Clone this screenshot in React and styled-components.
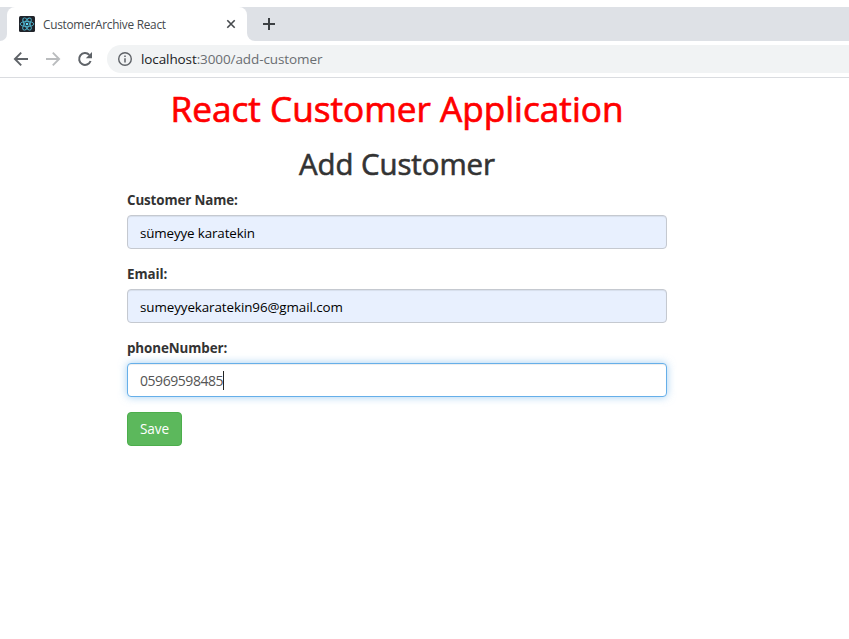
import React from "react";
import styled, { createGlobalStyle } from "styled-components";

const GlobalStyle = createGlobalStyle`
  *, *::before, *::after { box-sizing: border-box; }
  html, body { margin: 0; background: #fff; }
  body {
    font-family: "Open Sans", "Noto Sans", sans-serif;
    font-size: 13.4px;
    line-height: 20px;
    color: #333;
    overflow: hidden;
  }
`;

const Window = styled.div`
  height: 639px;
  padding-top: 7px;
  display: flex;
  flex-direction: column;
  background: #fff;
`;

const TabStrip = styled.div`
  display: flex;
  height: 34px;
`;

const StripStart = styled.div`
  width: 7px;
  background: #dee1e6;
  border-bottom-right-radius: 7px;
`;

const StripRest = styled.div`
  flex: 1;
  display: flex;
  align-items: center;
  padding-left: 15px;
  background: #dee1e6;
  border-bottom-left-radius: 8px;
`;

const TabSlot = styled.div`
  width: 240px;
  background: linear-gradient(#dee1e6 10px, #fff 10px);
`;

const Tab = styled.div`
  height: 34px;
  display: flex;
  align-items: center;
  padding: 0 10px 0 12px;
  background: #fff;
  border-radius: 8px 8px 0 0;
`;

const TabTitle = styled.span`
  flex: 1;
  margin-left: 8px;
  font-size: 11.8px;
  line-height: 16px;
  letter-spacing: ${(p) => p.$spacing};
  color: #45494d;
  white-space: nowrap;
`;

const Toolbar = styled.div`
  height: 37px;
  display: flex;
  align-items: center;
  padding-left: 13px;
  border-bottom: 1px solid #dadce0;
`;

const NavButtons = styled.div`
  display: flex;
  gap: 16px;
  width: 94px;
`;

const AddressBar = styled.div`
  flex: 1;
  height: 28px;
  display: flex;
  align-items: center;
  gap: 8px;
  padding-left: 10px;
  border-radius: 14px 0 0 14px;
  background: #f1f3f4;
`;

const Url = styled.span`
  font-size: 13.5px;
  letter-spacing: ${(p) => p.$spacing};
  color: #6a6e72;
  white-space: nowrap;
`;

const Host = styled.span`
  color: #202124;
`;

const Icon = styled.svg`
  display: block;
  flex: none;
`;

const Page = styled.main`
  width: 540px;
  margin-left: 127px;
`;

const Title = styled.h1`
  margin: 10px 0 0;
  font-size: 35.2px;
  line-height: 40px;
  font-weight: 500;
  letter-spacing: ${(p) => p.$spacing};
  text-align: center;
  white-space: nowrap;
  color: #f00;
  -webkit-text-stroke: 0.7px #f00;
`;

const Subtitle = styled.h2`
  margin: 19px 0 9px;
  font-size: 29.4px;
  line-height: 34px;
  font-weight: 500;
  letter-spacing: ${(p) => p.$spacing};
  text-align: center;
  -webkit-text-stroke: 0.6px #333;
`;

const Field = styled.div`
  margin-bottom: 15px;
`;

const Label = styled.label`
  display: block;
  margin-bottom: 5px;
  font-weight: 700;
  line-height: 20px;
  letter-spacing: ${(p) => p.$spacing};
`;

const Control = styled.div`
  height: 34px;
  display: flex;
  align-items: center;
  padding: 2px 12px 0;
  border: 1px solid ${(p) => (p.$focused ? "#66afe9" : "#c5c9d0")};
  border-radius: 4px;
  background: ${(p) => (p.$focused ? "#fff" : "#e8f0fe")};
  color: ${(p) => (p.$focused ? "#555" : "#000")};
  font-size: ${(p) => (p.$focused ? "14px" : "13.4px")};
  letter-spacing: ${(p) => p.$spacing};
  box-shadow: inset 0 1px 1px rgba(0, 0, 0, 0.075)
    ${(p) => (p.$focused ? ", 0 0 8px rgba(102, 175, 233, 0.6)" : "")};
`;

const Caret = styled.span`
  width: 1px;
  height: 19px;
  margin-top: -2px;
  background: #222;
`;

const SaveButton = styled.button`
  display: block;
  width: 55px;
  height: 34px;
  padding: 0;
  border: 1px solid #4cae4c;
  border-radius: 4px;
  background: #5cb85c;
  color: #fff;
  font: 400 13.6px/20px "Open Sans", "Noto Sans", sans-serif;
  letter-spacing: ${(p) => p.$spacing};
`;

const fields = [
  { label: "Customer Name:", labelSpacing: "-0.13px", value: "sümeyye karatekin", spacing: "-0.14px" },
  { label: "Email:", labelSpacing: "-0.1px", value: "sumeyyekaratekin96@gmail.com", spacing: "-0.09px" },
  { label: "phoneNumber:", labelSpacing: "-0.1px", value: "05969598485", spacing: "-0.45px", focused: true },
];

function ReactIcon() {
  return (
    <Icon width="16" height="16" viewBox="0 0 16 16">
      <rect width="16" height="16" rx="1.5" fill="#20232a" />
      <g fill="none" stroke="#4fb3cc" strokeWidth="0.9">
        <ellipse cx="8" cy="8" rx="6.8" ry="2.6" />
        <ellipse cx="8" cy="8" rx="6.8" ry="2.6" transform="rotate(60 8 8)" />
        <ellipse cx="8" cy="8" rx="6.8" ry="2.6" transform="rotate(120 8 8)" />
      </g>
      <circle cx="8" cy="8" r="1.3" fill="#61dafb" />
    </Icon>
  );
}

function CloseIcon() {
  return (
    <Icon width="12" height="12" viewBox="0 0 12 12">
      <path d="M2.3 2.3 9.7 9.7M9.7 2.3 2.3 9.7" stroke="#45494d" strokeWidth="1.6" />
    </Icon>
  );
}

function PlusIcon() {
  return (
    <Icon width="14" height="14" viewBox="0 0 14 14">
      <path d="M7 1v12M1 7h12" stroke="#3c4043" strokeWidth="2" />
    </Icon>
  );
}

function ArrowIcon({ color, forward }) {
  return (
    <Icon width="16" height="16" viewBox="0 0 16 16">
      <path
        d="M15 8H2.2M8.2 1.7 1.9 8l6.3 6.3"
        transform={forward ? "matrix(-1 0 0 1 16 0)" : undefined}
        fill="none"
        stroke={color}
        strokeWidth="1.9"
      />
    </Icon>
  );
}

function ReloadIcon() {
  return (
    <Icon width="16" height="16" viewBox="0 0 16 16">
      <path d="M13.6 10A5.9 5.9 0 1 1 12.3 3.9" fill="none" stroke="#5f6368" strokeWidth="2" />
      <path d="M15 1v6.2H8.8Z" fill="#5f6368" />
    </Icon>
  );
}

function InfoIcon() {
  return (
    <Icon width="16" height="16" viewBox="0 0 16 16">
      <circle cx="8" cy="8" r="6.3" fill="none" stroke="#5f6368" strokeWidth="1.4" />
      <path d="M8 7.2v4.3M8 4.4v1.6" stroke="#5f6368" strokeWidth="1.5" />
    </Icon>
  );
}

export default function App() {
  return (
    <Window>
      <GlobalStyle />
      <TabStrip>
        <StripStart />
        <TabSlot>
          <Tab>
            <ReactIcon />
            <TabTitle $spacing="-0.25px">CustomerArchive React</TabTitle>
            <CloseIcon />
          </Tab>
        </TabSlot>
        <StripRest>
          <PlusIcon />
        </StripRest>
      </TabStrip>
      <Toolbar>
        <NavButtons>
          <ArrowIcon color="#5f6368" />
          <ArrowIcon color="#babcbe" forward />
          <ReloadIcon />
        </NavButtons>
        <AddressBar>
          <InfoIcon />
          <Url $spacing="-0.1px">
            <Host>localhost</Host>:3000/add-customer
          </Url>
        </AddressBar>
      </Toolbar>
      <Page>
        <Title $spacing="-0.01px">React Customer Application</Title>
        <Subtitle $spacing="-0.05px">Add Customer</Subtitle>
        {fields.map((f) => (
          <Field key={f.label}>
            <Label $spacing={f.labelSpacing}>{f.label}</Label>
            <Control $focused={f.focused} $spacing={f.spacing}>
              {f.value}
              {f.focused && <Caret />}
            </Control>
          </Field>
        ))}
        <SaveButton $spacing="-0.1px">Save</SaveButton>
      </Page>
    </Window>
  );
}
